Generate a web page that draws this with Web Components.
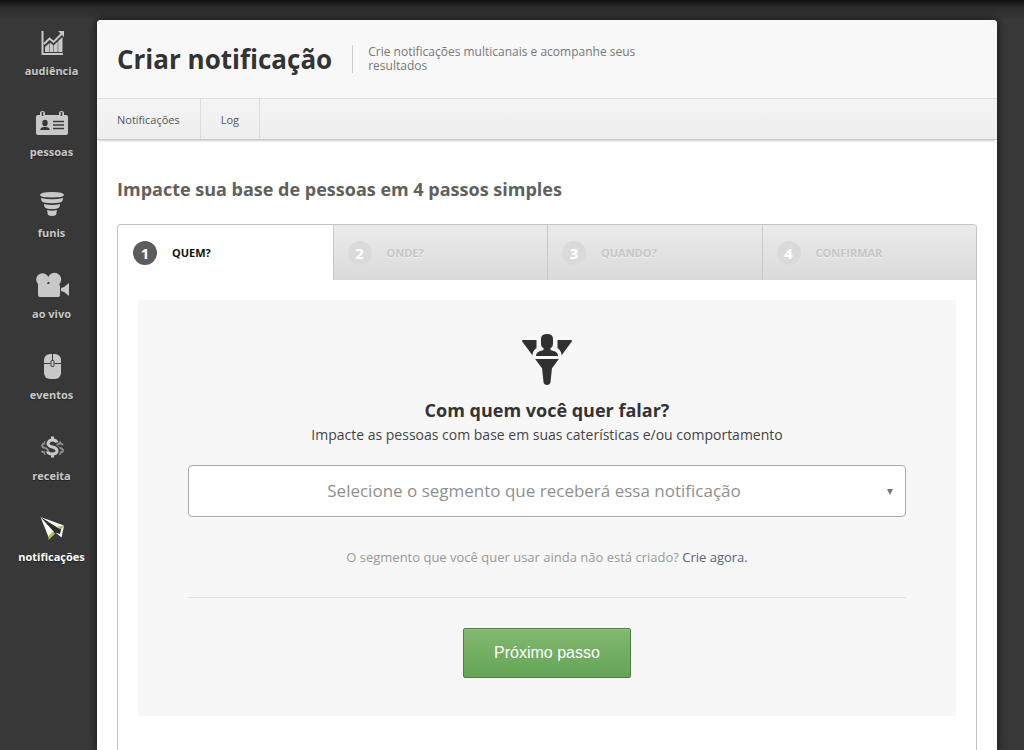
<!DOCTYPE html>
<html lang="pt-BR">
<head>
<meta charset="utf-8">
<meta name="viewport" content="width=device-width, initial-scale=1">
<title>Criar notificação</title>
<style>
  body {
    margin: 0;
    background: #383838;
    color: #333;
    font-family: "Open Sans", "Noto Sans", sans-serif;
  }
</style>
</head>
<body>
<app-shell>
  <side-nav slot="nav">
    <nav-item icon="chart">audiência</nav-item>
    <nav-item icon="badge">pessoas</nav-item>
    <nav-item icon="funnel">funis</nav-item>
    <nav-item icon="camera">ao vivo</nav-item>
    <nav-item icon="mouse">eventos</nav-item>
    <nav-item icon="money">receita</nav-item>
    <nav-item icon="plane" active>notificações</nav-item>
  </side-nav>

  <page-header title-text="Criar notificação">Crie notificações multicanais e acompanhe seus resultados</page-header>
  <sub-nav></sub-nav>
  <step-wizard heading="Impacte sua base de pessoas em 4 passos simples">
    <wizard-step slot="steps" number="1" active>QUEM?</wizard-step>
    <wizard-step slot="steps" number="2">ONDE?</wizard-step>
    <wizard-step slot="steps" number="3">QUANDO?</wizard-step>
    <wizard-step slot="steps" number="4">CONFIRMAR</wizard-step>
    <segment-form></segment-form>
  </step-wizard>
</app-shell>

<script>
const icons = {
  chart: `
    <path d="M8.500 2V25H29" fill="none" stroke="currentColor" stroke-width="2"/>
    <path d="M11 18L15.500 14V23H11ZM16 13.500L19.500 16.500V23H16ZM20 16L23.700 12.500V23H20ZM24.200 12L28.500 8V23H24.200Z" fill="currentColor"/>
    <path d="M10 15L15.500 9.500L19.500 13L28 4.500" fill="none" stroke="currentColor" stroke-width="2"/>
    <path d="M24 2H30V8Z" fill="currentColor"/>`,
  badge: `
    <path fill="currentColor" d="M4 5H6V3Q6 1 8.500 1T11 3V5H25V3Q25 1 27.500 1T30 3V5H32Q34 5 34 7V23Q34 25 32 25H4Q2 25 2 23V7Q2 5 4 5Z"/>
    <path d="M8.500 2V6M27.500 2V6" stroke="#383838" stroke-width="1.500"/>
    <ellipse cx="11" cy="13" rx="2.700" ry="3.300" fill="#383838"/>
    <path d="M6 20Q7 17 10 17H12Q15 17 16 20Z" fill="#383838"/>
    <path d="M19 11.500H30M19 15H30M19 18.500H30" stroke="#383838" stroke-width="1.300"/>`,
  funnel: `
    <path fill="currentColor" d="M6 4Q6 1 18 1T30 4Q30 6.500 18 6.500T6 4ZM7 7Q18 9.500 29 7Q29 11 26 11.500Q18 13 10 11.500Q7 11 7 7ZM10 13Q18 15 26 13Q26 17 23 17.500Q18 18.500 13 17.500Q10 17 10 13ZM13 19Q18 20.500 23 19L22 24Q18 26 14 24Z"/>`,
  camera: `
    <circle cx="8.500" cy="7.500" r="6.300" fill="currentColor"/>
    <circle cx="20.500" cy="7.500" r="6.700" fill="currentColor"/>
    <path d="M4 12H24Q26 12 26 14V23Q26 25 24 25H6Q4 25 4 23ZM27 16L30 15L35 11V24L30 20L27 19Z" fill="currentColor"/>
    <circle cx="14.500" cy="11" r="1" fill="#383838"/>`,
  mouse: `
    <rect x="10" y="1" width="17" height="25" rx="6" fill="currentColor"/>
    <path d="M10 10.500H16.500M20.500 10.500H27M18.500 1V7" stroke="#383838" stroke-width="1" fill="none"/>
    <rect x="17" y="7.500" width="3" height="6" rx="1" fill="none" stroke="#383838"/>`,
  money: `
    <defs>
      <path id="coin" d="M4.500-4.500Q3.500-7 0-7T-4.500-3.800Q-4.500-1 0 0T4.500 3.800Q4.500 7 0 7T-4.800 4.500M0-10.500V-7M0 7V10.500" fill="none"/>
    </defs>
    <g stroke="currentColor" stroke-width="3">
      <g opacity=".6">
        <use href="#coin" transform="translate(11 14) scale(.65)"/>
        <use href="#coin" transform="translate(26 14) scale(.65)"/>
      </g>
      <use href="#coin" x="18.500" y="13" stroke="#383838" stroke-width="6"/>
      <use href="#coin" x="18.500" y="13"/>
    </g>`,
  plane: `
    <path d="M6.500 2L29 10L30 12L26 21.500L23 19L16 23.500L14 20Z" fill="#2c2c2c"/>
    <path d="M6.500 2L30 10.500L25 13.500Z" fill="#fff"/>
    <path d="M6.500 2L20 17L14.500 22Z" fill="#fff"/>
    <path d="M27.500 13L30 11L27.500 22.500L21.500 17.500L26 19Z" fill="#fff"/>
    <path d="M14.500 25V21L18 17L21.500 18.500Z" fill="#a9c94a"/>
    <path d="M23.500 11.500L30 10.500L26 14.500Z" fill="#a9c94a"/>`
};

class AppShell extends HTMLElement {
  constructor() {
    super();
    this.attachShadow({ mode: "open" });
    this.shadowRoot.innerHTML = `
      <style>
        :host {
          display: flex;
          box-sizing: border-box;
          min-height: 100vh;
          padding: 20px 27px 0 0;
          background: linear-gradient(#111, #2c2c2c 8px, #383838 20px);
        }
        main {
          flex: 1;
          min-width: 0;
          display: flex;
          flex-direction: column;
          background: #fff;
          border-radius: 4px 4px 0 0;
          box-shadow: 0 0 10px rgba(0, 0, 0, .7);
        }
      </style>
      <slot name="nav"></slot>
      <main><slot></slot></main>
    `;
  }
}

class SideNav extends HTMLElement {
  constructor() {
    super();
    this.attachShadow({ mode: "open" });
    this.shadowRoot.innerHTML = `
      <style>
        :host { display: block; width: 97px; flex: none; }
        nav {
          display: flex;
          flex-direction: column;
          gap: 31px;
          padding: 9px 0 0 6px;
        }
      </style>
      <nav><slot></slot></nav>
    `;
  }
}

class NavItem extends HTMLElement {
  constructor() {
    super();
    this.attachShadow({ mode: "open" });
    this.shadowRoot.innerHTML = `
      <style>
        :host { display: block; color: #c8c8c8; }
        :host([active]) { color: #fff; }
        a {
          display: flex;
          flex-direction: column;
          align-items: center;
          gap: 4px;
          color: inherit;
          text-decoration: none;
          font-size: 11px;
          font-weight: 700;
          line-height: 16px;
          text-shadow: 0 1px 1px #222;
        }
        svg { width: 36px; height: 30px; }
      </style>
      <a href="#">
        <svg viewBox="0 0 36 30" aria-hidden="true">${icons[this.getAttribute("icon")]}</svg>
        <slot></slot>
      </a>
    `;
  }
}

class PageHeader extends HTMLElement {
  constructor() {
    super();
    this.attachShadow({ mode: "open" });
    this.shadowRoot.innerHTML = `
      <style>
        :host {
          display: flex;
          align-items: center;
          height: 78px;
          padding: 0 20px;
          background: #f8f8f8;
          border-bottom: 1px solid #dedede;
          border-radius: 4px 4px 0 0;
        }
        h1 {
          margin: 0;
          font-size: 26px;
          line-height: 36px;
          white-space: nowrap;
        }
        p {
          max-width: 290px;
          margin: 0 0 0 20px;
          padding-left: 15px;
          border-left: 1px solid #ccc;
          color: #777;
          font-size: 12px;
          line-height: 14px;
        }
      </style>
      <h1>${this.getAttribute("title-text")}</h1>
      <p><slot></slot></p>
    `;
  }
}

class SubNav extends HTMLElement {
  constructor() {
    super();
    this.attachShadow({ mode: "open" });
    this.shadowRoot.innerHTML = `
      <style>
        :host {
          display: block;
          background: linear-gradient(#f4f4f4, #eee);
          border-bottom: 1px solid #c8c8c8;
          box-shadow: 0 3px 2px -2px #ccc;
        }
        nav { display: flex; }
        a {
          padding: 1px 20px 0;
          border-right: 1px solid #dcdcdc;
          color: #555;
          font-size: 11px;
          line-height: 39px;
          text-decoration: none;
        }
      </style>
      <nav>
        <a href="#">Notificações</a>
        <a href="#">Log</a>
      </nav>
    `;
  }
}

class StepWizard extends HTMLElement {
  constructor() {
    super();
    this.attachShadow({ mode: "open" });
    this.shadowRoot.innerHTML = `
      <style>
        :host {
          flex: 1;
          display: flex;
          flex-direction: column;
          padding: 36px 20px 0;
        }
        h2 {
          margin: 0 0 22px;
          color: #5f615d;
          font-size: 18px;
          line-height: 26px;
        }
        .box {
          flex: 1;
          border: 1px solid #c4c4c4;
          border-bottom: 0;
          border-radius: 4px 4px 0 0;
        }
        .steps { display: flex; }
        .body { padding: 20px 20px 34px; }
      </style>
      <h2>${this.getAttribute("heading")}</h2>
      <div class="box">
        <div class="steps"><slot name="steps"></slot></div>
        <div class="body"><slot></slot></div>
      </div>
    `;
  }
}

class WizardStep extends HTMLElement {
  constructor() {
    super();
    this.attachShadow({ mode: "open" });
    this.shadowRoot.innerHTML = `
      <style>
        :host {
          flex: 1;
          display: flex;
          align-items: center;
          box-sizing: border-box;
          height: 55px;
          padding-left: 14px;
          gap: 15px;
          border-left: 1px solid #c8c8c8;
          background: linear-gradient(#ebebeb, #dadada);
          color: #c6c6c6;
          font-size: 11px;
          font-weight: 700;
          text-shadow: 0 1px 0 #f2f2f2;
        }
        :host(:last-of-type) { border-top-right-radius: 3px; }
        :host([active]) {
          border-left-color: transparent;
          background: none;
          color: #111;
          text-shadow: none;
        }
        .number {
          width: 24px;
          border-radius: 50%;
          background: #dadada;
          color: #fff;
          font-size: 15px;
          line-height: 24px;
          text-align: center;
          text-shadow: none;
        }
        :host([active]) .number { background: #5c5c5c; }
      </style>
      <span class="number">${this.getAttribute("number")}</span>
      <slot></slot>
    `;
  }
}

class SegmentForm extends HTMLElement {
  constructor() {
    super();
    this.attachShadow({ mode: "open" });
    this.shadowRoot.innerHTML = `
      <style>
        :host {
          display: block;
          padding: 32px 50px 38px;
          background: #f7f7f7;
          text-align: center;
        }
        .icon { display: block; width: 52px; height: 54px; margin: 0 auto; }
        h3 {
          margin: 12px 0 0;
          font-size: 18px;
          line-height: 24px;
        }
        label {
          display: block;
          color: #444;
          font-size: 14px;
          line-height: 26px;
        }
        .select {
          position: relative;
          margin-top: 17px;
        }
        .select::after {
          content: "";
          position: absolute;
          right: 13px;
          top: 24px;
          border: 3px solid transparent;
          border-top: 6px solid #777;
          border-bottom: 0;
          pointer-events: none;
        }
        select {
          appearance: none;
          display: block;
          width: 100%;
          height: 52px;
          padding: 0 26px 2px 0;
          border: 1px solid #aaa;
          border-radius: 4px;
          background: #fff;
          color: #8f8f8f;
          font: 17px "Open Sans", "Noto Sans", sans-serif;
          text-align: center;
          text-align-last: center;
        }
        p {
          margin: 0;
          padding: 30px 0;
          border-bottom: 1px solid #e2e2e2;
          color: #999;
          font-size: 13px;
          line-height: 20px;
        }
        p a { color: #59617a; text-decoration: none; }
        button {
          height: 50px;
          margin-top: 30px;
          padding: 0 30px;
          border: 1px solid #507d45;
          border-radius: 2px;
          background: linear-gradient(#81b970, #65a455);
          box-shadow: inset 0 1px 0 #95c687;
          color: #fff;
          font: 16px "Liberation Sans", Arial, sans-serif;
        }
      </style>
      <svg class="icon" viewBox="0 0 52 54" aria-hidden="true">
        <path d="M2 9H50L30 36L28.500 50Q28 52 26 52T23.500 50L22 36Z" fill="#303030" stroke="#303030" stroke-width="2" stroke-linejoin="round"/>
        <path d="M15.500 6H36.500V16Q41 18.500 41 27H11Q11 18.500 15.500 16Z" fill="#f7f7f7"/>
        <path d="M20 7Q20 2 26 2T32 7V12Q32 15 29.500 16V18L34 19.500Q37 21 37 24H15Q15 21 18 19.500L22.500 18V16Q20 15 20 12Z" fill="#303030"/>
      </svg>
      <h3>Com quem você quer falar?</h3>
      <label for="segment">Impacte as pessoas com base em suas caterísticas e/ou comportamento</label>
      <div class="select">
        <select id="segment">
          <option>Selecione o segmento que receberá essa notificação</option>
        </select>
      </div>
      <p>O segmento que você quer usar ainda não está criado? <a href="#">Crie agora.</a></p>
      <button type="button">Próximo passo</button>
    `;
  }
}

customElements.define("app-shell", AppShell);
customElements.define("side-nav", SideNav);
customElements.define("nav-item", NavItem);
customElements.define("page-header", PageHeader);
customElements.define("sub-nav", SubNav);
customElements.define("step-wizard", StepWizard);
customElements.define("wizard-step", WizardStep);
customElements.define("segment-form", SegmentForm);
</script>
</body>
</html>
